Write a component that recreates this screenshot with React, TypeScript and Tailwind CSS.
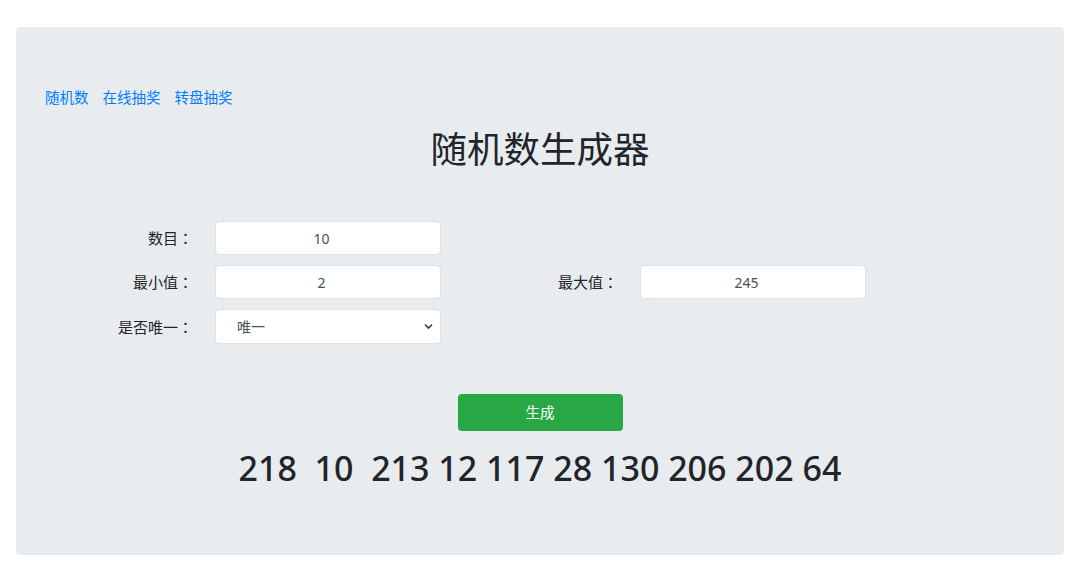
const CJK = "font-['Noto_Sans','Noto_Sans_CJK_SC',sans-serif]";

const NAV = ["随机数", "在线抽奖", "转盘抽奖"];
const NUMBERS = "218  10  213 12 117 28 130 206 202 64";

function Label({ text }: { text: string }) {
  return (
    <label className="w-[155px] shrink-0 pr-[7px] text-right text-[15px] leading-none text-[#212529]">
      {text}
      <span className="font-['Noto_Sans_CJK_TC',sans-serif]">：</span>
    </label>
  );
}

function Field({ value }: { value: string }) {
  return (
    <input
      type="text"
      defaultValue={value}
      className="ml-[15px] h-[34px] w-[226px] rounded-[4px] border border-[#dde1e5] bg-white pr-[13px] text-center text-[14px] text-[#495057] outline-none"
    />
  );
}

export default function App() {
  return (
    <div className={`min-h-[570px] bg-white pt-[27px] ${CJK}`}>
      <div className="mx-4 h-[528px] rounded-[4px] bg-[#e9ecef] px-[29px] pt-[63px]">
        {/* top links */}
        <nav className="flex gap-[14px] text-[14.5px] leading-none text-[#007bff]">
          {NAV.map((n) => (
            <a key={n} href="#" className="hover:underline">
              {n}
            </a>
          ))}
        </nav>

        <h1 className="mt-[26px] text-center text-[36.5px] font-normal leading-none text-[#212529]">
          随机数生成器
        </h1>

        {/* form */}
        <div className="mt-[54px] flex flex-col gap-[10px]">
          <div className="flex items-center">
            <Label text="数目" />
            <Field value="10" />
          </div>
          <div className="flex items-center">
            <Label text="最小值" />
            <Field value="2" />
            <div className="ml-[29px] flex items-center">
              <Label text="最大值" />
              <Field value="245" />
            </div>
          </div>
          <div className="flex items-center">
            <Label text="是否唯一" />
            <div className="relative ml-[15px] h-[35px] w-[226px]">
              <select className="h-full w-full appearance-none rounded-[4px] border border-[#dde1e5] bg-white pl-[21px] text-[14px] text-[#495057] outline-none">
                <option>唯一</option>
                <option>不唯一</option>
              </select>
              <svg
                className="pointer-events-none absolute right-[8px] top-[14px]"
                width="9"
                height="7"
                viewBox="0 0 9 7"
                fill="none"
              >
                <path d="M1 1.5l3.5 3.5 3.5-3.5" stroke="#343a40" strokeWidth="1.6" />
              </svg>
            </div>
          </div>
        </div>

        <button
          type="button"
          className="mx-auto mt-[50px] block h-[37px] w-[165px] rounded-[4px] bg-[#28a745] text-[14.5px] text-white"
        >
          生成
        </button>

        <h2 className="mt-[17px] whitespace-pre text-center font-['Noto_Sans',sans-serif] text-[34px] font-medium leading-[40px] text-[#212529]">
          {NUMBERS}
        </h2>
      </div>
    </div>
  );
}
